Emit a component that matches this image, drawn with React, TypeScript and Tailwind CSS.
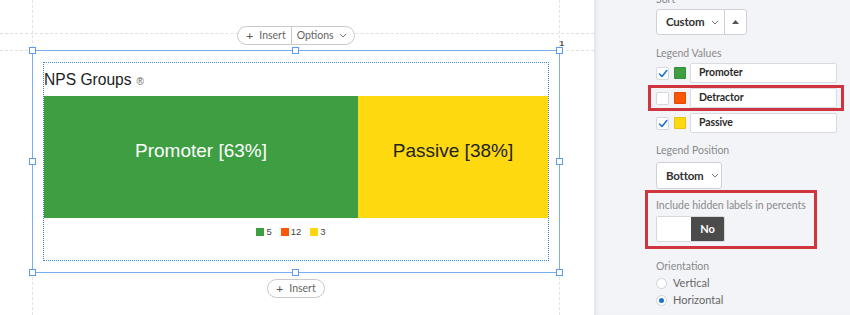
import React from "react";

const Handle = ({ cls }: { cls: string }) => (
  <div className={`absolute w-[7px] h-[7px] bg-white border border-[#5b9cf0] ${cls}`} />
);

const Check = () => (
  <svg width="10" height="9" viewBox="0 0 10 9">
    <path d="M1.5 5 L4 7.5 L8.8 1.5" fill="none" stroke="#1c73cf" strokeWidth="1.6" strokeLinecap="round" strokeLinejoin="round" />
  </svg>
);

const Chevron = () => (
  <svg width="8" height="5" viewBox="0 0 8 5">
    <path d="M1 1 L4 4 L7 1" fill="none" stroke="#777" strokeWidth="1" />
  </svg>
);

const LegendRow = ({ checked, color, label }: { checked: boolean; color: string; label: string }) => (
  <div className="flex items-center h-[20px]">
    <div className="w-[13px] h-[13px] bg-white border border-[#d6d8dd] rounded-[2px] flex items-center justify-center">
      {checked && <Check />}
    </div>
    <div className="w-[12px] h-[12px] ml-[5px] rounded-[1px] border border-black/10" style={{ background: color }} />
    <div className="ml-[4px] w-[147px] h-[20px] bg-white border border-[#d9dbe0] rounded-[2px] flex items-center pl-[8px] text-[10.5px] font-bold tracking-[-0.1px] text-[#2b2b2b]">
      {label}
    </div>
  </div>
);

export default function App() {
  const sans = { fontFamily: "Lato, Roboto, 'Noto Sans', sans-serif" };
  const arial = { fontFamily: "'Liberation Sans', Arial, sans-serif" };
  const label = "text-[10.5px] text-[#8a8a8a] leading-[14px]";
  return (
    <div className="w-[850px] h-[315px] flex overflow-hidden bg-white" style={sans}>
      {/* Canvas */}
      <div className="relative w-[594px] h-[315px] bg-white shrink-0">
        {/* guides */}
        <div className="absolute left-[32px] top-0 h-full border-l border-dashed border-[#e3e3e3]" />
        <div className="absolute left-[559px] top-0 h-full border-l border-dashed border-[#e3e3e3]" />
        <div className="absolute left-0 top-[33px] w-full border-t border-dashed border-[#e0e0e0]" />
        <div className="absolute left-0 top-[50px] w-full border-t border-dashed border-[#e0e0e0]" />

        <div className="relative ml-[32px] w-[528px] pt-[26px] flex flex-col items-center">
          {/* top pill */}
          <div className="h-[19px] flex items-center bg-white border border-[#c9c9c9] rounded-full text-[10.5px] text-[#666]">
            <div className="flex items-center pl-[8px] pr-[5px] h-full">
              <span className="text-[12px] leading-none mr-[6px] text-[#555]">+</span>Insert
            </div>
            <div className="h-full border-l border-[#c9c9c9]" />
            <div className="flex items-center pl-[5px] pr-[7px] h-full">
              Options
              <span className="ml-[5px]"><Chevron /></span>
            </div>
          </div>

          {/* selection box */}
          <div className="relative mt-[5px] w-full h-[223px] border border-[#7aaef0] pl-[10px] pr-[10px] pt-[11px]">
            <Handle cls="-left-[4px] -top-[4px]" />
            <Handle cls="left-[259px] -top-[4px]" />
            <Handle cls="-right-[4px] -top-[4px]" />
            <Handle cls="-left-[4px] top-[107px]" />
            <Handle cls="-right-[4px] top-[107px]" />
            <Handle cls="-left-[4px] -bottom-[4px]" />
            <Handle cls="left-[259px] -bottom-[4px]" />
            <Handle cls="-right-[4px] -bottom-[4px]" />
            <div className="absolute -right-[5px] -top-[13px] text-[8px] font-bold text-[#444]" style={arial}>1</div>

            <div className="w-[506px] h-[199px] border border-dotted border-[#3b8ad6] flex flex-col" style={arial}>
              <div className="h-[33px] flex items-center text-[15.6px] text-[#222] pt-[1px]">
                NPS Groups
                <span className="ml-[5px] text-[10px] text-[#666] mt-[2px]">®</span>
              </div>
              <div className="h-[122px] flex">
                <div className="w-[314px] bg-[#3d9e42] flex items-center justify-center text-white text-[19px] pb-[12px]">
                  Promoter [63%]
                </div>
                <div className="flex-1 bg-[#fed910] flex items-center justify-center text-[#222] text-[19px] pb-[12px]">
                  Passive [38%]
                </div>
              </div>
              <div className="flex justify-center items-center gap-[9px] mt-[7px] text-[9.5px] text-[#444] pr-[10px]">
                <div className="flex items-center gap-[2px]">
                  <div className="w-[8px] h-[8px] bg-[#3d9e42]" />5
                </div>
                <div className="flex items-center gap-[2px]">
                  <div className="w-[8px] h-[8px] bg-[#fb5508]" />12
                </div>
                <div className="flex items-center gap-[2px]">
                  <div className="w-[8px] h-[8px] bg-[#fed910]" />3
                </div>
              </div>
            </div>
          </div>

          {/* bottom pill */}
          <div className="mt-[6px] h-[19px] flex items-center bg-white border border-[#c9c9c9] rounded-full text-[10.5px] text-[#666] pl-[8px] pr-[8px]">
            <span className="text-[12px] leading-none mr-[6px] text-[#555]">+</span>Insert
          </div>
        </div>
      </div>

      {/* Sidebar */}
      <div className="relative flex-1 h-[315px] bg-[#f3f4f8] shadow-[inset_5px_0_5px_-3px_rgba(0,0,0,0.07)] pl-[62px]">
        <div className={`-mt-[8px] ${label}`}>Sort</div>
        <div className="mt-[3px] flex w-[91px] h-[26px] bg-white border border-[#cfd1d6] rounded-[3px] text-[11.5px] font-bold tracking-[-0.2px] text-[#333]">
          <div className="flex items-center pl-[9px] w-[68px] border-r border-[#cfd1d6]">
            Custom<span className="ml-[7px]"><Chevron /></span>
          </div>
          <div className="flex-1 flex items-center justify-center">
            <svg width="7" height="4" viewBox="0 0 7 4"><path d="M0 4 L3.5 0 L7 4 Z" fill="#555" /></svg>
          </div>
        </div>

        <div className={`mt-[11px] ${label}`}>Legend Values</div>
        <div className="mt-[3px] flex flex-col gap-[5px]">
          <LegendRow checked color="#3d9e42" label="Promoter" />
          <LegendRow checked={false} color="#fb5508" label="Detractor" />
          <LegendRow checked color="#fed910" label="Passive" />
        </div>

        <div className={`mt-[10px] ${label}`}>Legend Position</div>
        <div className="mt-[5px] flex items-center w-[66px] h-[27px] bg-white border border-[#cfd1d6] rounded-[3px] pl-[9px] text-[11.5px] font-bold tracking-[-0.2px] text-[#333]">
          Bottom<span className="ml-[7px]"><Chevron /></span>
        </div>

        <div className={`mt-[9px] ${label}`}>Include hidden labels in percents</div>
        <div className="mt-[4px] flex w-[69px] h-[26px] rounded-[2px] overflow-hidden border border-[#d6d8dd]">
          <div className="w-[34px] bg-white" />
          <div className="flex-1 bg-[#4b4b4b] text-white text-[11px] font-bold flex items-center justify-center">No</div>
        </div>

        <div className={`mt-[17px] ${label}`}>Orientation</div>
        <div className="mt-[2px] flex items-center h-[17px] text-[11px] text-[#666]">
          <div className="w-[11px] h-[11px] rounded-full bg-white border border-[#cfd1d6]" />
          <span className="ml-[6px]">Vertical</span>
        </div>
        <div className="flex items-center h-[17px] text-[11px] text-[#666]">
          <div className="w-[11px] h-[11px] rounded-full bg-white border border-[#cfd1d6] flex items-center justify-center">
            <div className="w-[5px] h-[5px] rounded-full bg-[#1c73cf]" />
          </div>
          <span className="ml-[6px]">Horizontal</span>
        </div>

        {/* annotation boxes */}
        <div className="absolute left-[54px] top-[85px] w-[196px] h-[26px] border-[3px] border-[#d0343f]" />
        <div className="absolute left-[51px] top-[190px] w-[172px] h-[59px] border-[3px] border-[#d0343f]" />
      </div>
    </div>
  );
}
